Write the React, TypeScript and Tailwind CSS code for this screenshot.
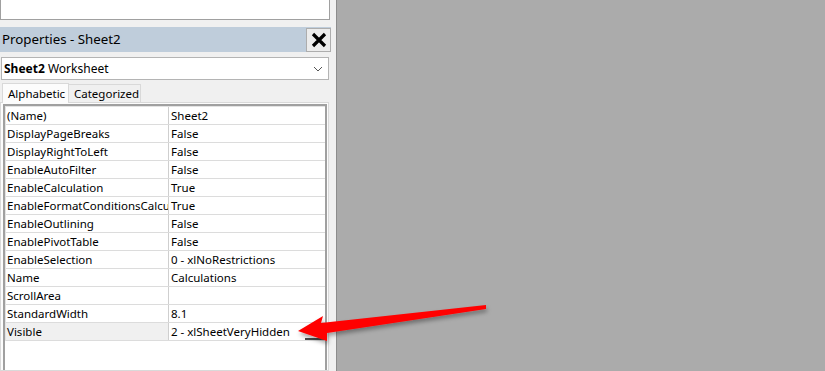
import React from "react";

const rows: [string, string][] = [
  ["(Name)", "Sheet2"],
  ["DisplayPageBreaks", "False"],
  ["DisplayRightToLeft", "False"],
  ["EnableAutoFilter", "False"],
  ["EnableCalculation", "True"],
  ["EnableFormatConditionsCalculation", "True"],
  ["EnableOutlining", "False"],
  ["EnablePivotTable", "False"],
  ["EnableSelection", "0 - xlNoRestrictions"],
  ["Name", "Calculations"],
  ["ScrollArea", ""],
  ["StandardWidth", "8.1"],
  ["Visible", "2 - xlSheetVeryHidden"],
];

function Arrow() {
  return (
    <svg className="absolute left-0 top-0 pointer-events-none" width="825" height="371">
      <defs>
        <filter id="shadow" x="-10%" y="-50%" width="120%" height="200%">
          <feDropShadow dx="1" dy="3" stdDeviation="2" floodColor="#000" floodOpacity="0.35" />
        </filter>
      </defs>
      <polygon
        points="298,331 323,316 321,323 486,305 486,309 327,333 327,341"
        fill="#ff0000"
        filter="url(#shadow)"
      />
    </svg>
  );
}

export default function App() {
  return (
    <div className="relative w-[825px] h-[371px] flex overflow-hidden font-['Noto_Sans',sans-serif] text-[11.5px] text-black">
      {/* Properties pane */}
      <div className="w-[337px] h-full bg-[#f0f0f0] flex flex-col border-r border-[#8c8c8c]">
        <div className="h-[20px] mr-[6px] bg-white border-l border-r border-b border-[#a0a0a0]" />

        {/* Title bar */}
        <div className="mt-[7px] h-[25px] mr-[5px] bg-[#bfcddb] flex items-center justify-between">
          <span className="pl-[2px] text-[13.3px] leading-none">Properties - Sheet2</span>
          <button className="w-[25px] h-[24px] mt-[1px] bg-[#ececec] border border-[#adadad] flex items-center justify-center">
            <svg width="16" height="16" viewBox="0 0 16 16">
              <path d="M2 2 L14 14 M14 2 L2 14" stroke="#000" strokeWidth="3.2" />
            </svg>
          </button>
        </div>

        {/* Object dropdown */}
        <div className="mt-[5px] h-[23px] ml-[1px] mr-[7px] bg-white border border-[#b4b4b4] flex items-center justify-between px-[2px] text-[12px]">
          <span>
            <span className="font-bold">Sheet2</span> Worksheet
          </span>
          <svg width="10" height="6" viewBox="0 0 10 6" className="mr-[3px]">
            <path d="M1 1 L5 5 L9 1" fill="none" stroke="#555" strokeWidth="1" />
          </svg>
        </div>

        {/* Tabs */}
        <div className="mt-[3px] flex items-end h-[19px] pl-[2px]">
          <div className="relative z-10 h-[20px] -mb-[1px] w-[67px] pl-[5px] bg-[#fcfcfc] border-t border-l border-r border-[#d9d9d9] flex items-center">
            Alphabetic
          </div>
          <div className="h-[18px] w-[72px] pl-[5px] bg-[#f0f0f0] border-t border-r border-[#d9d9d9] flex items-center">
            Categorized
          </div>
        </div>

        {/* Tab body */}
        <div className="flex-1 mr-[7px] bg-[#fcfcfc] border border-[#d9d9d9] pt-[1px] pl-[2px] pr-[1px]">
          <div className="h-full border-2 border-[#a0a0a0] border-b-0 bg-white">
            <div className="border-l border-t border-[#e3e3e3]">
              {rows.map(([k, v], i) => {
                const last = i === rows.length - 1;
                return (
                  <div key={k} className="flex h-[18px] border-b border-[#dcdcdc]">
                    <div
                      className={`w-[163px] shrink-0 border-r border-[#cfcfcf] overflow-hidden whitespace-nowrap pl-[1px] leading-[17px] ${
                        last ? "bg-[#f0f0f0]" : ""
                      }`}
                    >
                      {k}
                    </div>
                    <div className="relative flex-1 pl-[2px] leading-[17px] whitespace-nowrap overflow-hidden">
                      {v}
                      {last && (
                        <div className="absolute right-0 bottom-0 w-[20px] h-[9px] border-r-2 border-b-2 border-[#4a4a4a]" />
                      )}
                    </div>
                  </div>
                );
              })}
            </div>
          </div>
        </div>
      </div>

      {/* Workbook area */}
      <div className="flex-1 h-full bg-[#ababab]" />

      <Arrow />
    </div>
  );
}
